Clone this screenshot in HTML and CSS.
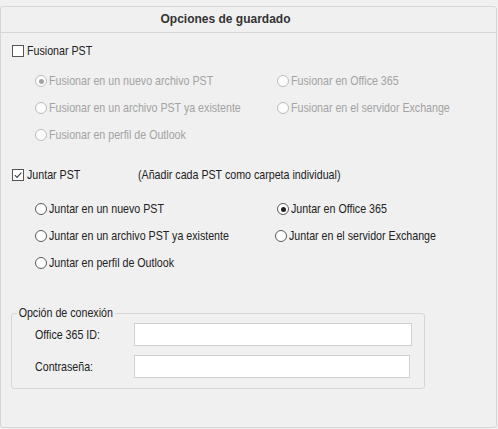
FILE: index.html
```html
<!DOCTYPE html>
<html lang="es">
<head>
<meta charset="utf-8">
<title>Opciones de guardado</title>
<link rel="stylesheet" href="styles.css">
</head>
<body>
<div class="panel">
  <div class="panel-head">Opciones de guardado</div>
  <div class="panel-body">
    <div class="check-row">
      <label class="check"><span class="box"></span><span class="t">Fusionar PST</span></label>
    </div>
    <div class="radio-grid disabled">
      <label class="radio"><span class="dot on"></span><span class="t">Fusionar en un nuevo archivo PST</span></label>
      <label class="radio"><span class="dot"></span><span class="t">Fusionar en Office 365</span></label>
      <label class="radio"><span class="dot"></span><span class="t">Fusionar en un archivo PST ya existente</span></label>
      <label class="radio"><span class="dot"></span><span class="t">Fusionar en el servidor Exchange</span></label>
      <label class="radio"><span class="dot"></span><span class="t">Fusionar en perfil de Outlook</span></label>
    </div>

    <div class="check-row second">
      <label class="check"><span class="box checked"><svg viewBox="0 0 10 10" width="10" height="10"><path d="M1.8 5.2 L4 7.4 L8.4 2.6" fill="none" stroke="#444" stroke-width="1.2"/></svg></span><span class="t">Juntar PST</span></label>
      <span class="t note">(Añadir cada PST como carpeta individual)</span>
    </div>
    <div class="radio-grid juntar">
      <label class="radio"><span class="dot"></span><span class="t">Juntar en un nuevo PST</span></label>
      <label class="radio"><span class="dot on"></span><span class="t">Juntar en Office 365</span></label>
      <label class="radio"><span class="dot"></span><span class="t">Juntar en un archivo PST ya existente</span></label>
      <label class="radio shift"><span class="dot"></span><span class="t">Juntar en el servidor Exchange</span></label>
      <label class="radio"><span class="dot"></span><span class="t">Juntar en perfil de Outlook</span></label>
    </div>

    <div class="group">
      <span class="legend t">Opción de conexión</span>
      <div class="field">
        <span class="field-label"><span class="t">Office 365 ID:</span></span>
        <span class="input wide"></span>
      </div>
      <div class="field">
        <span class="field-label"><span class="t">Contraseña:</span></span>
        <span class="input"></span>
      </div>
    </div>
  </div>
</div>
</body>
</html>
```
FILE: styles.css
```css
* { box-sizing: border-box; }
html, body {
  margin: 0;
  padding: 0;
  background: #f0f0f0;
}
body {
  font-family: "Liberation Sans", Arial, sans-serif;
  font-size: 13px;
  color: #222;
  width: 498px;
  height: 429px;
  overflow: hidden;
}
/* condensed text, Arial Narrow proportions */
.t {
  display: inline-block;
  transform: scaleX(0.82);
  transform-origin: 0 50%;
  white-space: nowrap;
}
.panel {
  margin-top: 6px;
  width: 497px;
  height: 422px;
  border: 1px solid #d6d6d6;
  border-radius: 3px;
  background: #f0f0f0;
}
.panel-head {
  height: 26px;
  border-bottom: 1px solid #d6d6d6;
  border-radius: 3px 3px 0 0;
  font-weight: bold;
  font-size: 12px;
  line-height: 24px;
  color: #333;
  text-align: center;
  padding-right: 46px;
}
.panel-body {
  display: flex;
  flex-direction: column;
  padding-top: 10px;
}
.check-row {
  display: grid;
  grid-template-columns: 126px auto;
  align-items: center;
  height: 16px;
  padding-left: 11px;
}
.check-row.second { margin-top: 24px; }
.check {
  display: flex;
  align-items: center;
  gap: 3px;
  line-height: 16px;
  white-space: nowrap;
}
.box {
  width: 12px;
  height: 12px;
  border: 1px solid #555;
  background: #fff;
  display: flex;
  align-items: center;
  justify-content: center;
  flex: none;
}
.box svg { display: block; }
.note { line-height: 16px; }

.radio-grid {
  display: grid;
  grid-template-columns: 242px auto;
  grid-auto-rows: 16px;
  row-gap: 11px;
  padding-left: 34px;
  margin-top: 14px;
}
.radio-grid.juntar { margin-top: 18px; }
.radio {
  display: flex;
  align-items: center;
  gap: 2px;
  line-height: 16px;
  white-space: nowrap;
}
.radio.shift { margin-left: -2px; }
.dot {
  width: 12px;
  height: 12px;
  border-radius: 50%;
  border: 1px solid #5a5a5a;
  background: #fff;
  display: flex;
  align-items: center;
  justify-content: center;
  flex: none;
}
.dot.on::after {
  content: "";
  width: 5px;
  height: 5px;
  border-radius: 50%;
  background: #222;
}
.disabled { color: #a3a3a3; }
.disabled .dot { border-color: #bcbcbc; background: #fcfcfc; }
.disabled .dot.on::after { background: #a3a3a3; }

.group {
  position: relative;
  margin: 42px 0 0 10px;
  width: 414px;
  border: 1px solid #d6d6d6;
  border-radius: 3px;
  padding: 9px 0 10px 23px;
  display: flex;
  flex-direction: column;
  gap: 9px;
}
.legend {
  position: absolute;
  top: -9px;
  left: 5px;
  padding: 0 3px 0 2px;
  line-height: 16px;
  background: #f0f0f0;
}
.field {
  display: flex;
  align-items: center;
  height: 23px;
}
.field-label {
  width: 99px;
  line-height: 16px;
  flex: none;
}
.input {
  display: block;
  width: 276px;
  height: 23px;
  background: #fff;
  border: 1px solid #d0d0d0;
}
.input.wide { width: 278px; }
```
